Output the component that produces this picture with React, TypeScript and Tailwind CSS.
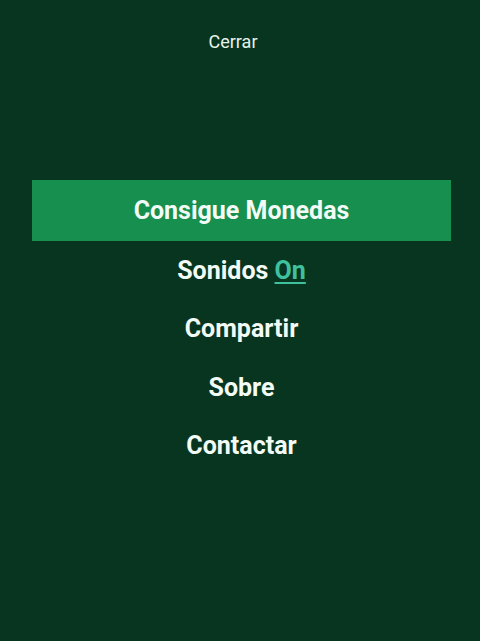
import React from "react";

export default function App() {
  const items = ["Compartir", "Sobre", "Contactar"];
  return (
    <div
      className="w-[480px] h-[641px] bg-[#083520] flex flex-col text-[#f2fbf5]"
      style={{ fontFamily: "Roboto, 'Noto Sans', sans-serif" }}
    >
      <div className="h-[82px] pr-[14px] flex items-center justify-center text-[18px] text-[#e6f3ea]">
        <span className="mt-[1px]">Cerrar</span>
      </div>
      <div className="h-[98px]" />
      <div className="ml-[32px] mr-[29px] flex flex-col">
        <div className="h-[61px] bg-[#178f4f] flex items-center justify-center text-[25px] font-bold">
          Consigue Monedas
        </div>
        <div className="h-[58.5px] flex items-center justify-center text-[25px] font-bold">
          <span>
            Sonidos{" "}
            <span className="text-[#3fc19f] underline underline-offset-[3px] decoration-2">On</span>
          </span>
        </div>
        {items.map((t) => (
          <div
            key={t}
            className="h-[58.5px] flex items-center justify-center text-[25px] font-bold"
          >
            {t}
          </div>
        ))}
      </div>
    </div>
  );
}
